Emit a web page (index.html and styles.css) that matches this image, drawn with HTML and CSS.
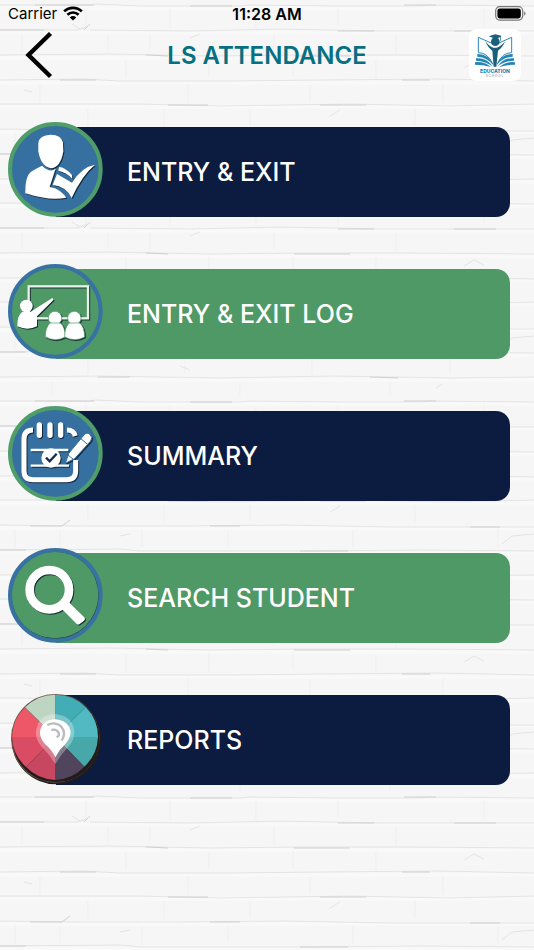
FILE: index.html
```
<!DOCTYPE html>
<html lang="en">
<head>
    <meta charset="UTF-8">
    <meta name="viewport" content="width=device-width, initial-scale=1.0">
    <title>LS Attendance</title>
    <link rel="stylesheet" href="styles.css">
</head>
<body>
    <div class="status-bar">
        <div class="carrier">
            <span>Carrier</span>
            <svg width="20" height="15" viewBox="0 0 20 15" fill="none" stroke="#000" stroke-width="2.7">
                <path d="M1.2 5.4A12.6 12.6 0 0 1 18.8 5.4"/>
                <path d="M4.4 8.8A8 8 0 0 1 15.6 8.8"/>
                <path d="M10 14.6 6.8 11.4A4.6 4.6 0 0 1 13.2 11.4Z" fill="#000" stroke="none"/>
            </svg>
        </div>
        <span class="time">11:28 AM</span>
        <svg class="battery" width="32" height="15" viewBox="0 0 32 15">
            <rect x="1.7" y="0.7" width="27" height="13.4" rx="4" fill="none" stroke="#777" stroke-width="1.2"/>
            <rect x="3.4" y="2.4" width="23.4" height="10" rx="2.4"/>
            <path d="M30 5.2Q31.600 6 31.600 7.5T30 9.8Z" fill="#888"/>
        </svg>
    </div>

    <header class="header">
        <button class="back" type="button" aria-label="Back">
            <svg width="28" height="48" viewBox="0 0 28 48">
                <path d="M25.5 2.5 3.5 24 25.5 45.5" fill="none" stroke="#000" stroke-width="4.4"/>
            </svg>
        </button>
        <h1>LS ATTENDANCE</h1>
        <div class="logo">
            <svg width="42" height="34" viewBox="0 0 126 102">
                <g fill="none" stroke="#2a8ab8" stroke-width="3">
                    <path d="M54 28 13 10V56Q42 56 56 90" />
                    <path d="M72 28 113 10V56Q84 56 70 90"/>
                </g>
                <g fill="#2585b5">
                    <path d="M10 60Q45 59 60 96 42 70 10 68Z"/>
                    <path d="M6 73Q38 70 56 98 36 81 6 80Z"/>
                    <path d="M3 85Q30 81 50 99 28 92 3 92Z"/>
                    <path d="M116 60Q81 59 66 96 84 70 116 68Z"/>
                    <path d="M120 73Q88 70 70 98 90 81 120 80Z"/>
                    <path d="M123 85Q96 81 76 99 98 92 123 92Z"/>
                </g>
                <g fill="#1b5f7c">
                    <path d="M34 22Q48 40 58 41H68Q78 40 94 22 84 43 72 50L67 98H59L55 50Q42 42 34 22Z"/>
                    <circle cx="64" cy="23" r="13"/>
                    <path d="M44 7 64 1 82 5 80 9V20H78V10L64 14Z"/>
                </g>
            </svg>
            <span class="logo-name">EDUCATION</span>
            <span class="logo-sub">SCHOOL</span>
        </div>
    </header>

    <nav class="menu">
        <a class="item navy" href="#entry">
            <svg class="icon" viewBox="24 22 285 285">
                <circle cx="166" cy="164" r="136" fill="#3670a0" stroke="#4f9d68" stroke-width="12"/>
                <g class="glyph">
                    <path d="M115 85Q118 61 152 60 184 61 189 83L190 110Q182 160 152 161 123 156 115 110Z"/>
                    <path d="M126 153Q150 176 167 162L149 217 165 221Q188 232 199 249 150 260 76 236 75 186 92 172 105 163 126 153Z"/>
                    <path d="M177 157Q196 158 216 181L217 192Q199 173 175 168Z"/>
                    <path d="M171 178 216 204Q245 157 285 150 246 182 215 250 199 215 158 211Z"/>
                </g>
            </svg>
            <span>ENTRY &amp; EXIT</span>
        </a>
        <a class="item green" href="#log">
            <svg class="icon" viewBox="24 22 285 285">
                <circle cx="166" cy="164" r="136" fill="#4f9966" stroke="#3872a3" stroke-width="12"/>
                <g class="glyph">
                    <rect x="86" y="89" width="178" height="96" fill="none" stroke="#e9efeb" stroke-width="7"/>
                    <circle cx="79" cy="148" r="19"/>
                    <path d="M67 165H92L157 124 161 129 111 179V209Q83 223 52 209 51 176 67 165Z"/>
                    <g stroke="#4f9966" stroke-width="2">
                        <circle cx="165" cy="184" r="20"/>
                        <circle cx="223" cy="184" r="20"/>
                        <path d="M150 199H181Q195 209 196 241 167 257 136 241 136 212 150 199Z"/>
                        <path d="M208 199H239Q253 209 254 241 225 257 194 241 194 212 208 199Z"/>
                    </g>
                </g>
            </svg>
            <span>ENTRY &amp; EXIT LOG</span>
        </a>
        <a class="item navy" href="#summary">
            <svg class="icon" viewBox="24 22 285 285">
                <circle cx="166" cy="164" r="136" fill="#3670a0" stroke="#4f9d68" stroke-width="12"/>
                <g class="glyph">
                    <g fill="none" stroke="#fff">
                        <path d="M99 94Q72 94 72 121V216Q72 243 99 243H199Q227 243 227 216V184M201 94Q221 94 226 112" stroke-width="15"/>
                        <path d="M118 79V110M150 79V110M182 79V110" stroke-width="16" stroke-linecap="round"/>
                        <path d="M92 154H205M92 201H207" stroke-width="7"/>
                    </g>
                    <circle cx="153" cy="178" r="29"/>
                    <path d="M196 194 207 163 252 109Q260 99 270 107 280 117 272 127L224 180Z" stroke="#3670a0" stroke-width="3"/>
                    <path d="M240 118 265 139M204 169 220 182" fill="none" stroke="#3670a0" stroke-width="3"/>
                </g>
                <path d="M138 177 149 188 170 165" fill="none" stroke="#172d55" stroke-width="7"/>
            </svg>
            <span>SUMMARY</span>
        </a>
        <a class="item green" href="#search">
            <svg class="icon" viewBox="24 22 285 285">
                <circle cx="166" cy="164" r="132" fill="#24483b"/>
                <circle cx="165" cy="163" r="130" fill="#4f9966"/>
                <circle cx="166" cy="164" r="136" fill="none" stroke="#3872a3" stroke-width="12"/>
                <g class="glyph">
                    <circle cx="148" cy="147" r="59" fill="none" stroke="#fff" stroke-width="26"/>
                    <path d="M186 206 207 185 253 230Q257 235 252 240L239 250Q234 254 229 249Z"/>
                </g>
            </svg>
            <span>SEARCH STUDENT</span>
        </a>
        <a class="item navy" href="#reports">
            <svg class="icon" viewBox="24 22 285 285">
                <circle cx="169" cy="171" r="134" fill="#211b1c"/>
                <circle cx="166" cy="167" r="133" fill="#6b5848"/>
                <circle cx="168" cy="168" r="131" fill="#211b1c"/>
                <path d="M166 163V36A128 128 0 0 1 257 73Z" fill="#42adb5"/>
                <path d="M166 163 257 73A128 128 0 0 1 294 163Z" fill="#50b9c1"/>
                <path d="M166 163H294A128 128 0 0 1 253 252Z" fill="#48a7a8"/>
                <path d="M166 163 253 252A128 128 0 0 1 166 292Z" fill="#50455c"/>
                <path d="M166 163V292A128 128 0 0 1 78 253Z" fill="#c84760"/>
                <path d="M166 163 78 253A128 128 0 0 1 36 163Z" fill="#d94c63"/>
                <path d="M166 163H36A128 128 0 0 1 75 74Z" fill="#ed5767"/>
                <path d="M166 163 75 74A128 128 0 0 1 166 36Z" fill="#bed5c2"/>
                <path d="M166 244Q148 214 125 192 105 169 108 145 114 97 166 94 217 99 223 145 224 171 207 190 181 217 166 244Z" fill="#fff" opacity="0.3"/>
                <path d="M166 224Q155 201 135 184 119 165 120 147 125 112 166 110 205 113 212 147 211 168 196 184 177 201 166 224Z" fill="#fff"/>
                <path d="M142 127Q166 115 184 132 200 151 185 174M154 142Q169 138 176 150 180 158 170 164" fill="none" stroke="#b9bdbf" stroke-width="7"/>
            </svg>
            <span>REPORTS</span>
        </a>
    </nav>
</body>
</html>
```
FILE: styles.css
```
* {
    box-sizing: border-box;
}

body {
    margin: 0;
    min-height: 100vh;
    font-family: Inter, "Liberation Sans", sans-serif;
    color: #000;
    background-color: #f6f6f6;
    /* white brick wall, eight courses per tile */
    background-image: url("data:image/svg+xml,%3Csvg xmlns='http://www.w3.org/2000/svg' width='534' height='198'%3E%3Cg fill='none' stroke='%23f9f9f9' stroke-width='3'%3E%3Cpath d='M0 8H534M0 33H534M0 58H534M0 83H534M0 107H534M0 132H534M0 157H534M0 182H534'/%3E%3C/g%3E%3Cg fill='none' stroke='%23e4e4e4'%3E%3Cpath d='M0 5H90L96 4 142 6H240L250 5 340 6H420L430 5 534 6M0 30H76L84 28M90 30 190 31 280 29 380 31H534M0 55 110 54 210 56 300 55H410L534 56M0 80 84 79 120 81H230L320 80 440 79 534 81M0 104H140L220 106 350 104 450 106 534 104M0 129 80 130H180L286 129 390 131H534M0 154 120 153 140 155H312L420 154 534 155M0 179 100 178 220 180 334 178 450 180 534 179'/%3E%3C/g%3E%3Cg fill='none' stroke='%23d0d0d0'%3E%3Cpath d='M35 5H94M190 6H232M404 5H436M0 30H44M84 30 90 24M338 31H374M454 31H496M146 55 168 56M294 56H350M60 80H96M402 80H430M168 105H208M320 105H366M30 130H62L70 124M210 130H240M470 131H500M300 155H348M0 154H26M98 179H130M370 179 398 180'/%3E%3C/g%3E%3Cg fill='none' stroke='%23efefef'%3E%3Cpath d='M86 9V27M170 9V28M256 10V28M338 9V26M484 8V27M22 34V52M108 34V50M150 34V52M274 34V52M396 34V54M126 60V78M209 59V77M293 59V76M376 60V78M40 84V102M188 84V103M310 85V102M443 84V102M88 109V126M164 109V127M250 109V125M415 109V126M15 134V152M60 134V151M142 134V151M228 134V150M353 134V151M498 133V152M88 159V176M185 158V175M312 159V177M450 158V176M52 184V197M240 184V197M390 184V197'/%3E%3C/g%3E%3Cg fill='none' stroke='%23e4e4e4'%3E%3Cpath d='M72 24 80 29 90 25M190 38 200 34M464 68 474 62 484 67M24 90 32 92M330 116 340 110M120 140 130 138M502 148 512 140 534 138M180 168 190 172M436 190 442 186'/%3E%3C/g%3E%3C/svg%3E");
    background-position: top center;
}

/* status bar */
.status-bar {
    display: grid;
    grid-template-columns: 1fr auto 1fr;
    align-items: center;
    height: 27px;
    padding: 0 8px;
    font-size: 15px;
}

.carrier {
    display: flex;
    align-items: center;
    gap: 6px;
}

.time {
    font-size: 16px;
    font-weight: 600;
}

.battery {
    justify-self: end;
}

/* header */
.header {
    display: grid;
    grid-template-columns: 1fr auto 1fr;
    align-items: center;
    height: 56px;
    padding: 0 13px;
}

.back {
    justify-self: start;
    padding: 0 12px;
    border: none;
    background: none;
    cursor: pointer;
}

.back svg {
    display: block;
}

h1 {
    margin: 0;
    font-size: 24px;
    font-weight: 600;
    color: #067082;
}

.logo {
    justify-self: end;
    display: flex;
    flex-direction: column;
    align-items: center;
    width: 52px;
    height: 52px;
    padding-top: 5px;
    border-radius: 8px;
    background-color: #fff;
}

.logo-name {
    font-size: 5px;
    line-height: 6px;
    font-weight: 800;
    color: #2585b5;
}

.logo-sub {
    font-size: 3px;
    line-height: 4px;
    letter-spacing: 1px;
    color: #777;
}

/* menu */
.menu {
    display: flex;
    flex-direction: column;
    gap: 52px;
    padding: 44px 24px 44px 56px;
}

.item {
    display: flex;
    align-items: center;
    height: 90px;
    border-radius: 0 14px 14px 0;
    font-size: 25px;
    font-weight: 500;
    color: #fff;
    text-decoration: none;
}

.navy {
    background-color: #0c1c40;
}

.green {
    background-color: #4f9966;
}

/* the round icon hangs over the left end of the bar */
.icon {
    flex: none;
    width: 95px;
    height: 95px;
    margin: -5px 24px 0 -48px;
}

.glyph {
    fill: #fff;
    filter: drop-shadow(3px 3px 2px rgba(10, 25, 40, 0.8));
}
```
